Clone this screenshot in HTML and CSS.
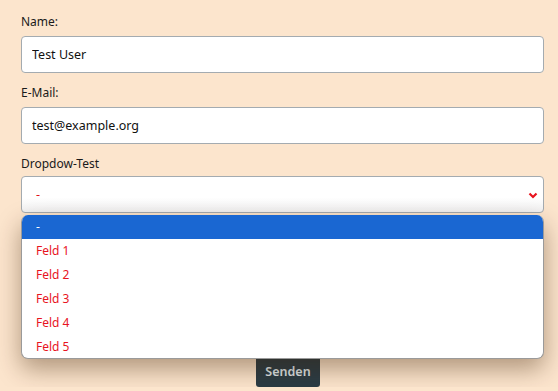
FILE: index.html
```html
<!DOCTYPE html>
<html lang="de">
<head>
  <meta charset="utf-8">
  <title>Formular</title>
  <link rel="stylesheet" href="styles.css">
</head>
<body>
  <form class="form">
    <div class="field">
      <label for="name">Name:</label>
      <input id="name" type="text" value="Test User">
    </div>
    <div class="field">
      <label for="mail">E-Mail:</label>
      <input id="mail" type="text" value="test@example.org">
    </div>
    <div class="field select-field">
      <label for="drop">Dropdow-Test</label>
      <div class="select">
        <span class="select-value">-</span>
        <svg class="chevron" width="10" height="7" viewBox="0 0 10 7">
          <path d="M1.5 1.5 L5 5 L8.5 1.5" fill="none" stroke="#e8141e" stroke-width="2.2"/>
        </svg>
      </div>
      <!-- open dropdown list -->
      <ul class="options">
        <li class="active">-</li>
        <li>Feld 1</li>
        <li>Feld 2</li>
        <li>Feld 3</li>
        <li>Feld 4</li>
        <li>Feld 5</li>
      </ul>
    </div>
    <div class="actions">
      <button type="button">Senden</button>
    </div>
  </form>
</body>
</html>
```

FILE: styles.css
```css
body {
  margin: 0;
  background-color: #fce5cd;
  font-family: "Noto Sans", "DejaVu Sans", sans-serif;
  font-size: 12px;
  color: #1a1a1a;
}
.form {
  padding: 13px 14px 0 21px;
}
.field {
  margin-bottom: 11px;
}
.field label {
  display: block;
  line-height: 18px;
  margin-bottom: 5px;
}
.field input,
.select {
  box-sizing: border-box;
  display: block;
  width: 100%;
  height: 37px;
  padding: 0 10px;
  border: 1px solid #a4abb0;
  border-radius: 4px;
  background: #fff;
  font-family: inherit;
  font-size: 12.5px;
  color: #111;
  outline: none;
}
.select-field {
  position: relative;
}
.select-field label {
  margin-bottom: 3px;
}
.select {
  display: flex;
  align-items: center;
  justify-content: space-between;
  padding: 0 5px 0 14px;
  background: linear-gradient(#fff 60%, #f1f1f1);
}
.select-value {
  color: #e0141c;
}
.chevron {
  margin-top: 1px;
}
.options {
  position: absolute;
  top: 60px;
  left: 0;
  right: 0;
  margin: 0;
  padding: 0;
  list-style: none;
  background: #fff;
  border: 1px solid #9a9a9a;
  border-top: none;
  border-radius: 7px;
  overflow: hidden;
  box-shadow: 0 10px 24px rgba(60, 30, 0, 0.4);
  z-index: 2;
}
.options li {
  height: 24px;
  line-height: 24px;
  padding-left: 14px;
  color: #e8141e;
}
.options li.active {
  background: #1a67d2;
  color: #fff;
}
.options li:last-child {
  height: 23px;
}
.actions {
  padding-left: 235px;
  margin-top: 143px;
}
.actions button {
  width: 64px;
  height: 31px;
  padding: 0;
  border: none;
  border-radius: 3px;
  background: #2b3c45;
  color: #dfe6ea;
  font-family: inherit;
  font-size: 12.5px;
  font-weight: 600;
}
```
